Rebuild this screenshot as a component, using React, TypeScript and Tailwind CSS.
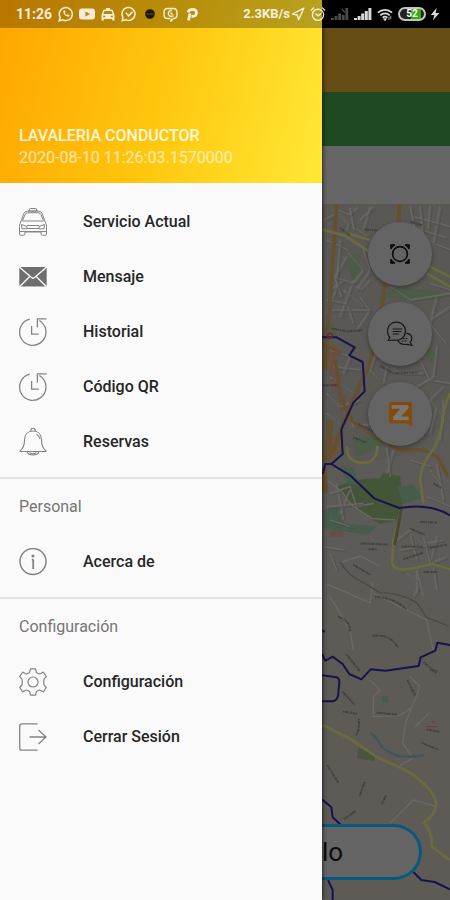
import type { ReactNode } from "react";

const historyIcon = (
  <svg viewBox="0 0 28 28" fill="none" stroke="currentColor" strokeWidth="1.3" className="h-7 w-7">
    <path d="M10.8 1.2A13.2 13.2 0 1 0 23 4.6" />
    <path d="M27.6 .8H18.4V9.400M23 4.600 20.400 2.400" />
    <path d="M12.600 8v8.200h7.200" />
  </svg>
);

const mainItems = [
  {
    label: "Servicio Actual",
    icon: (
      <svg viewBox="0 0 28 28" fill="none" stroke="currentColor" strokeWidth="1" className="h-7 w-7">
        <path d="M10.5 3V1.2c0-.4.3-.7.7-.7h5.6c.4 0 .7.3.7.7V3M9 3h10" />
        <path d="M1.2 15.5 4.6 6.2C5.2 4.3 6.4 3.4 8.4 3.2c3.6-.4 7.6-.4 11.2 0 2 .2 3.2 1.1 3.8 3l3.4 9.3" />
        <path d="M3.6 12.6 6 6.6c.4-1 1.1-1.6 2.2-1.7 3.8-.4 7.8-.4 11.6 0 1.1.1 1.8.7 2.2 1.7l2.4 6" />
        <path d="M3.4 13h21.200M1.200 15.500c-.6 1-.7 1.700-.7 3V26c0 .8.5 1.300 1.300 1.300h2.800c.8 0 1.300-.5 1.300-1.300v-2h16.200v2c0 .8.5 1.300 1.300 1.300h2.800c.8 0 1.300-.5 1.300-1.300v-7.500c0-1.300-.1-2-.7-3" />
        <path d="M2.500 16.500 8 18.500v2.300H3zM25.500 16.500 20 18.500v2.300h5zM8 17.500h12M8 20.500h12M1 23.500h26" />
      </svg>
    ),
  },
  {
    label: "Mensaje",
    icon: (
      <svg viewBox="0 0 28 28" className="h-7 w-7">
        <rect x=".3" y="4" width="27.400" height="19.500" rx="1.500" fill="#6e6e6e" />
        <path d="M.8 4.500 12.500 14.500c.9.8 2.100.8 3 0L27.200 4.500M1 23.300l9.500-9.600M27 23.300l-9.500-9.600" fill="none" stroke="#fafafa" strokeWidth="1.400" />
      </svg>
    ),
  },
  { label: "Historial", icon: historyIcon },
  { label: "Código QR", icon: historyIcon },
  {
    label: "Reservas",
    icon: (
      <svg viewBox="0 0 28 28" fill="none" stroke="currentColor" strokeWidth="1.100" className="h-7 w-7">
        <path d="M11.800 3.200V2.400a2.200 2.200 0 0 1 4.400 0v.8" />
        <path d="M14 3c-5.400 0-8.500 3.700-8.500 9 0 4.600-.9 8.200-4.400 10.800-.3.300-.2.700.3.700h25.200c.5 0 .6-.4.3-.7-3.500-2.600-4.400-6.200-4.400-10.800 0-5.300-3.100-9-8.500-9Z" />
        <path d="M8 24c1 2 3 3 6 3s5-1 6-3M10.500 24.500c.8 1 2 1.300 3.500 1.300s2.700-.3 3.500-1.300M17.500 6.500c2 .8 3 2.300 3.300 4.300" />
      </svg>
    ),
  },
];

const personalItems = [
  {
    label: "Acerca de",
    icon: (
      <svg viewBox="0 0 28 28" fill="none" stroke="currentColor" strokeWidth="1.500" className="h-7 w-7">
        <circle cx="14" cy="13.500" r="13" />
        <path d="M14.200 11.500V21M12.800 11.700h1.400" strokeWidth="1.800" />
        <circle cx="14" cy="8" r=".8" fill="currentColor" />
      </svg>
    ),
  },
];

const settingsItems = [
  {
    label: "Configuración",
    icon: (
      <svg viewBox="0 0 28 28" fill="none" stroke="currentColor" strokeWidth="1.200" strokeLinejoin="round" className="h-7 w-7">
        <path d="M11.500.8h5l.9 3.700 2.400 1.200c.7.4 1.300.3 2-.1l2.500-1.500 3 4.400-2.300 2.700c-.3 1.900-.3 3.700 0 5.600l2.300 2.700-3 4.400-2.500-1.500c-.7-.4-1.300-.5-2-.1l-2.400 1.200-.9 3.700h-5l-.9-3.700-2.400-1.200c-.7-.4-1.300-.3-2 .1l-2.500 1.500-3-4.400L3 16.800c.3-1.900.3-3.700 0-5.600L.7 8.500l3-4.400 2.500 1.500c.7.4 1.300.5 2 .1l2.400-1.200z" />
        <circle cx="14" cy="14" r="5" />
      </svg>
    ),
  },
  {
    label: "Cerrar Sesión",
    icon: (
      <svg viewBox="0 0 28 28" fill="none" stroke="currentColor" strokeWidth="1.300" className="h-7 w-7">
        <path d="M18.500.8H3C1.600.8.700 1.700.700 3.100v21.800c0 1.400.9 2.300 2.300 2.300h15.500" />
        <path d="M10.500 14h16.700M19.500 7l7.500 7-7.500 7" />
      </svg>
    ),
  },
];

type Item = { label: string; icon: ReactNode };

function MenuList({ items }: { items: Item[] }) {
  return (
    <ul>
      {items.map((item) => (
        <li key={item.label}>
          <a href="#" className="flex h-[55px] items-center gap-9 pl-[19px] text-base font-medium text-[#262626]">
            <span className="text-[#848484]">{item.icon}</span>
            {item.label}
          </a>
        </li>
      ))}
    </ul>
  );
}

function MenuSection({ title, items }: { title: string; items: Item[] }) {
  return (
    <section className="mt-2 border-t-2 border-[#e3e3e3]">
      <h2 className="flex h-[55px] items-center pl-[19px] text-base text-[#757575]">{title}</h2>
      <MenuList items={items} />
    </section>
  );
}

function StatusBar() {
  return (
    <div className="absolute inset-x-0 top-0 z-20 flex h-7 items-center justify-between bg-black/28 pr-2.5 pl-4 text-white/85">
      <div className="flex items-center gap-[5px]">
        <span className="text-sm font-bold">11:26</span>
        <svg viewBox="0 0 16 16" fill="none" stroke="currentColor" strokeWidth="1.500" className="ml-px h-4 w-4">
          <path d="M1.200 14.800 2.200 11.400A6.500 6.500 0 1 1 4.700 13.800z" />
          <path d="M5.300 4.800c-.6 3 2.900 6.400 5.800 5.800l.5-1.500-1.800-.9-.9.900c-1-.4-1.700-1.200-2.100-2.100l.8-.9-.8-1.800z" fill="currentColor" stroke="none" />
        </svg>
        <svg viewBox="0 0 16 16" className="h-4 w-4">
          <path fillRule="evenodd" fill="currentColor" d="M3 2.500h10a3 3 0 0 1 3 3v5a3 3 0 0 1-3 3H3a3 3 0 0 1-3-3v-5a3 3 0 0 1 3-3Zm3.500 3v5L11 8z" />
        </svg>
        <svg viewBox="0 0 16 16" className="h-4 w-4">
          <path fillRule="evenodd" fill="currentColor" d="M6 2h4v1.500h1.600c.6 0 1 .3 1.200.8L14.500 9v5.500h-2.300V13H3.800v1.500H1.500V9l1.700-4.700c.2-.5.6-.8 1.200-.8H6zM4.500 5 3.400 8h9.200l-1.100-3zM3.200 9.700v1.600h2V9.700zm7.600 0v1.600h2V9.700z" />
        </svg>
        <svg viewBox="0 0 16 16" fill="none" stroke="currentColor" strokeWidth="1.500" className="h-4 w-4">
          <path d="M1.200 14.800 2 11.400A6.500 6.500 0 1 1 4.700 13.800z" />
          <path d="m4.800 6.800 3 3 3.600-4" />
        </svg>
        <svg viewBox="0 0 16 16" className="h-4 w-4">
          <circle cx="8" cy="8" r="4.800" fill="#1d1600" />
          <path d="M4.500 8h7" stroke="#6a5717" strokeWidth="1" />
        </svg>
        <svg viewBox="0 0 16 16" fill="none" stroke="currentColor" strokeWidth="1.400" className="h-4 w-4">
          <path d="M7 12.500H4.500C2 12.500 1 11 1 8.500v-2c0-2.500 1-4 3.500-4h6c2.500 0 3.500 1.500 3.500 4v2c0 2.500-1 4-3.500 4L8 15v-2.500M9 4.500a3 3 0 1 0 1.500 5" />
          <path d="M7.500 5.500v3h3z" fill="currentColor" stroke="none" />
        </svg>
        <svg viewBox="0 0 16 16" fill="none" stroke="currentColor" strokeWidth="2.800" className="h-4 w-4">
          <path d="M4.500 14.500 6 7.500" />
          <path d="M4.200 6.500C4.500 4.200 6 3.400 8.500 3.400c2.600 0 4 1.300 4 3.400 0 2.400-1.800 3.700-5 3.500" />
        </svg>
      </div>

      <div className="flex items-center gap-[5px]">
        <span className="text-[13px] font-bold">2.3KB/s</span>
        <svg viewBox="0 0 14 14" fill="none" stroke="currentColor" strokeWidth="1.400" strokeLinejoin="round" className="-ml-1 h-3.5 w-3.5">
          <path d="M12.800 1.200 1.500 7l4.800 1 1.300 4.800z" />
        </svg>
        <svg viewBox="0 0 16 16" fill="none" stroke="currentColor" strokeWidth="1.400" className="h-4 w-4">
          <circle cx="8" cy="8.800" r="5.600" />
          <path d="M1 4.500 4 1.500M15 4.500l-3-3M5.500 7.500 8 9.800l3-2.300" />
        </svg>
        <svg viewBox="0 0 18 14" fill="currentColor" className="h-3.5 w-[18px] text-[#4c4c4c]">
          <path d="M0 11h2.800v2H0zM3.600 9h2.800v4H3.600zM7.200 6.500H10V13H7.200zM10.800 8h2.800v5h-2.800zM14.400 1h2.800v12h-2.800z" />
          <path d="m10.500 2.500 1-.9 3 3.600-1 .9z" />
        </svg>
        <svg viewBox="0 0 18 14" fill="currentColor" className="h-3.5 w-[18px]">
          <path d="M0 11h3v2H0zM3.600 9h3v4h-3zM7.200 6.500h3V13h-3zM10.800 4h3v9h-3zM14.400 1h3v12h-3z" />
        </svg>
        <svg viewBox="0 0 18 16" fill="none" stroke="currentColor" strokeWidth="1.900" className="h-4 w-4">
          <path d="M1 6.500c4.600-4.300 11.400-4.300 16 0M3.700 9.500c3-2.800 7.600-2.800 10.600 0M6.300 12.200c1.600-1.400 3.800-1.400 5.400 0" />
          <path d="M9 15.500 7.300 13.300h3.400zM13.500 11v4M15.500 10v4" fill="currentColor" strokeWidth=".8" />
        </svg>
        <span className="flex h-3.5 w-7 items-center justify-center overflow-hidden rounded-full border-2 border-[#c4c4c4] bg-[linear-gradient(90deg,#222_45%,#2fae12_45%,#2fae12_88%,#222_88%)] text-[10px] leading-none font-bold text-white">
          52
        </span>
        <svg viewBox="0 0 10 14" fill="currentColor" className="-ml-px h-3.5 w-2.5">
          <path d="M6.800.8.800 8h3.500l-1.300 5.200L9.400 6H5.600z" />
        </svg>
      </div>
    </div>
  );
}

const blocks = [
  "M40 60l40-20 36 30-10 30M84 30l30 14 30-22M120 24l10 60 40 24M150 60l40-40M180 20l-20 70",
  "M300 20l14 60M330 16l8 90 40 30M360 16l-6 70M390 20l-20 110 50 20M310 50l110 30M300 80l110 34",
  "M50 120l60 30 50 60-30 40-60-20M90 120l-10 120M110 170l-36 60 20 60M160 150l20 60-40 60",
  "M60 270l40-30 50 30 30-30M50 300l60 10 20 60M80 260l-30 80M100 270l60 50M130 240l-40 110M60 330l120 0",
  "M150 290l30 40-40 60M240 260l60 40 120-20M360 250l60 20M380 290l-20 80 50 60M420 320l-60 40",
  "M60 450l60 20-20 50M70 500l80 10M60 530l70 50M50 580l40 40 60-20M200 450l-20 60 30 30",
  "M210 480l60 40 70 0M230 500l-10 50M330 480l30 60 60 10M380 440l-10 90-50 30M400 560l-40 40 50 60",
  "M50 640l50 40M110 620l20 60 60-10M170 680l30-40M380 620l-20 80M400 600l-10 120",
  "M230 740l10 90M250 750l-20 70M300 780l60 20M360 810l50 60M380 790l20 110M350 890l70 30",
  "M60 880l60-20 20 60 50-10M50 920l110-10M80 850l20 110M120 870l-30 70M60 960l60 20",
  "M180 1010l40 40M260 1020l40-30 40 40 60-10M270 1050l110-20M300 1000l20 80M340 1010l20 80M380 1010l-20 80 50-20",
  "M60 1060l20 50M40 1040l60 10M290 1120l40 30-20 40M320 1110l0 70M370 1100l10 70",
];

// one stroke per street name, too small to read at this zoom level
const labels = [
  "M162 88l44 4M300 64l36 12M90 84l30 22M66 386l46 8 46-4M210 498l40 22 76-2M40 556l44 0M145 672l46 24M130 712l40 16",
  "M370 850l24 14M330 966l52 2M300 986l44 18M152 1030l80 4M176 1048l24 0M276 1040l64 0M360 1044l50-10M280 1078l60-20M340 1116l40 0",
  "M130 1094l50 30M194 1190q60 4 94 38M84 1250q34 10 36 44M188 1308q50-8 76 34M110 1364l40 50M340 1386l40 34",
  "M96 1474l38 40M98 1534l44 8M146 1556q4 30-8 50M200 1538l60 6M292 1440l24 48M336 1628l50 22M350 1588l40 8M52 1696l34 54M164 1746l-16 44M228 1786l-12 26M102 1858l36-26M360 1410l24 4",
];

function MapView() {
  return (
    <svg viewBox="36 12 384 2088" preserveAspectRatio="xMinYMin slice" fill="none" aria-hidden="true" className="absolute inset-0 h-full w-full bg-[#5c5b58]">
      <path d="M36 12h384v620l-80 120-304 60z" fill="#595855" />
      <path d="M36 1110l160 30 224 100v860H36z" fill="#5e5b57" />
      <path d="M110 170l36-10 6 50-26 30zM200 290l70-30 140 20-20 20-90 0zM40 380l30-10 10 40-40 10zM130 720l90-20 10 30-90 40zM350 440l30 20-10 30-20-10z" fill="#4d5c46" />
      <path d="M130 840l80-6 10-16 50 10 10 80-20 54-50 10-80-50-50-60z" fill="#435638" />
      <path d="M40 930l60-10 0 50 100 10-30 24-130-20zM90 800l40 0 20 60-40-10zM260 860l50-4 30 36-60 20z" fill="#465c4c" />
      <path d="M56 500l40 20 0 50-30 10zM80 570l30 20-14 70zM60 990l40 0 0 20-40 0z" fill="#644f49" />
      <path d="M46 430l40 10-10 70-40-10zM46 710l50 4-20 70-40 0z" fill="#6a533a" />
      <path d="M216 1488h20v20h-20z" fill="#465c50" />
      <path d="M145 1644l50 20 0 20-54-10z" fill="#4a543f" />
      <g stroke="#676664" strokeWidth="5">
        {blocks.map((d) => (
          <path key={d} d={d} />
        ))}
      </g>
      <g stroke="#4a4946" strokeWidth="3" transform="translate(7 6)" opacity=".55">
        {blocks.map((d) => (
          <path key={d} d={d} />
        ))}
      </g>
      <g stroke="#6b6966" strokeWidth="4">
        <path d="M46 836l50 40 30 40 60 40 70 4M90 1088l60-20 60 30M50 1152l130 56 8-60M190 1180l160 80 10 50 10 40M320 1110l20 80M60 1190l60 100 10 60" />
        <path d="M180 1440l30 30-20 20 0 60 80-4 30-20M300 1430l30 30-44 110-8 60 30 44-40 24M240 1870l70-70 70 20M316 1580l40-40" />
      </g>
      <path d="M90 1084q20 40 70 64l50 30q60 0 110 30l30 44 66 26" stroke="#494947" strokeWidth="4" />
      <g stroke="#64502f" strokeWidth="12">
        <path d="M80 12l-10 150-14 200-10 150" />
        <path d="M268 12l-2 60M224 250l-12 120-36 130-60 130-50 130" />
        <path d="M36 430l60 30M76 480l16 110 30 70 56 40 90 50q90-10 120 30l26 50" strokeWidth="10" />
        <path d="M60 660l-6 120M40 800l6 80" strokeWidth="18" />
      </g>
      <g stroke="#6c6b3c" strokeWidth="8">
        <path d="M36 88l70 20 70 46M110 100l70 20M360 200l60 30M350 220l70 40" />
        <path d="M420 580q-20 40-24 100l-20 60q-50 60-44 110l8 60M110 740q0 46 46 48t46-50" />
        <path d="M274 926l-24 100-4 60q4 26 40 22t80-16l54 16" />
        <path d="M36 1574l80 40 90 60 80 36q80 50 90 90t-36 68q26 20 26 72l52 40" />
      </g>
      <path d="M274 926l-20 110" stroke="#4a4631" strokeWidth="9" />
      <path d="M182 1600q16 10 26 30t50 36q30 8 84 0" stroke="#41545d" strokeWidth="7" />
      <g stroke="#383736" strokeWidth="6" strokeDasharray="5 2 9 2 3 2" opacity=".7">
        {labels.map((d) => (
          <path key={d} d={d} />
        ))}
      </g>
      <path d="M366 1566h8M350 1580h34" stroke="#713c38" strokeWidth="4" />
      <g stroke="#171351" strokeWidth="6" strokeLinejoin="round">
        <path d="M36 412h44l54 30-16 24 40 20 6 88-34 34-36 80 4 74-34 30 56 34 74 70 74 28q90-16 152 22" />
        <path d="M64 792h-18l-8 30M36 1290l8 6M36 1362l10 20 22-12 30 22 20 30 36 16 28-30 44 4 100-14 6-26 44-20 6-24 42 8" />
        <path d="M36 1426l44 6q10 4 8 16l-4 40q-4 14-16 16H36" />
        <path d="M36 1798l28 24 4 30 24 22M54 2040l14 30v30M310 2016l24 24 40 6 46 22" />
      </g>
      <circle cx="60" cy="407" r="7" stroke="#6b2035" strokeWidth="4" />
    </svg>
  );
}

const actions = [
  {
    label: "Centrar",
    icon: (
      <svg viewBox="0 0 20 20" fill="none" stroke="#0c0c0c" strokeWidth="1.600" className="h-5 w-5">
        <circle cx="10" cy="10" r="7.400" />
        <path d="M1 5V1h4M15 1h4v4M19 15v4h-4M5 19H1v-4" />
        <path d="M1 1h4L1 5zM19 1v4l-4-4zM19 19h-4l4-4zM1 19v-4l4 4z" fill="#0c0c0c" strokeWidth=".5" />
      </svg>
    ),
  },
  {
    label: "Chat",
    icon: (
      <svg viewBox="0 0 26 26" fill="none" stroke="#161616" strokeWidth="1.200" strokeLinejoin="round" className="h-[26px] w-[26px]">
        <path d="M3 16.500A9 9 0 1 1 7.500 19L1 19.500z" />
        <path d="M5.800 8h9.500M5.800 10.500h8.500M5.800 13h6" />
        <path d="M19.500 12.200c3.200.6 5.300 2.700 5.300 5.200 0 1.500-.6 2.800-1.700 3.700l2 3.400-5.100-1.200c-4 .6-7.600-.8-8.800-3.500l-1-1" />
        <path d="M15.500 17.500h6M14.500 20h5" strokeDasharray="2 1" />
      </svg>
    ),
  },
  {
    label: "Zello",
    icon: (
      <svg viewBox="0 0 24 25" className="h-[26px] w-[25px]">
        <path d="M3.500 1h17C22 1 23 2 23 3.500v15l1 6-6-3H3.500C2 21.500 1 20.500 1 19V3.500C1 2 2 1 3.500 1Z" fill="#85490a" />
        <path d="M3.500 3.800h14.700c1 0 1.600.6 1.600 1.600v1.400L12.500 15h7.300v3.400H4.800v-2.900l7-8.100H3.500z" fill="#777" />
      </svg>
    ),
  },
];

export default function App() {
  return (
    <div className="relative flex min-h-screen overflow-hidden font-[Roboto,sans-serif]">
      <StatusBar />

      <nav className="relative z-10 flex w-[322px] shrink-0 flex-col bg-[#fafafa] shadow-[1px_0_4px_rgba(0,0,0,0.6)]">
        <header className="flex h-[183px] flex-col justify-end bg-[linear-gradient(105deg,#ffa500_0%,#ffc60d_50%,#ffe936_100%)] pb-3.5 pl-[19px] text-base leading-[22px]">
          <p className="font-medium text-white/85">LAVALERIA CONDUCTOR</p>
          <p className="text-white/65">2020-08-10 11:26:03.1570000</p>
        </header>
        <div className="pt-[11px]">
          <MenuList items={mainItems} />
          <MenuSection title="Personal" items={personalItems} />
          <MenuSection title="Configuración" items={settingsItems} />
        </div>
      </nav>

      <main className="flex min-w-0 flex-1 flex-col">
        <div className="h-7 bg-black" />
        <div className="h-16 bg-[#654d15]" />
        <div className="h-[54px] bg-[#1f4a21]" />
        <div className="h-[58px] bg-[#666]" />
        <div className="relative flex flex-1 flex-col justify-between">
          <MapView />
          <div className="relative flex flex-col items-end gap-4 pt-[18px] pr-[18px]">
            {actions.map((action) => (
              <button
                key={action.label}
                type="button"
                aria-label={action.label}
                className="flex h-16 w-16 items-center justify-center rounded-full bg-[#646464] shadow-[0_2px_4px_rgba(0,0,0,0.35)]"
              >
                {action.icon}
              </button>
            ))}
          </div>
          <button
            type="button"
            className="relative mr-7 mb-5 h-14 rounded-r-full border-3 border-l-0 border-[#075a7e] bg-[#656565] text-left text-[26px] text-[#0c0c0c]"
          >
            lo
          </button>
        </div>
      </main>
    </div>
  );
}
